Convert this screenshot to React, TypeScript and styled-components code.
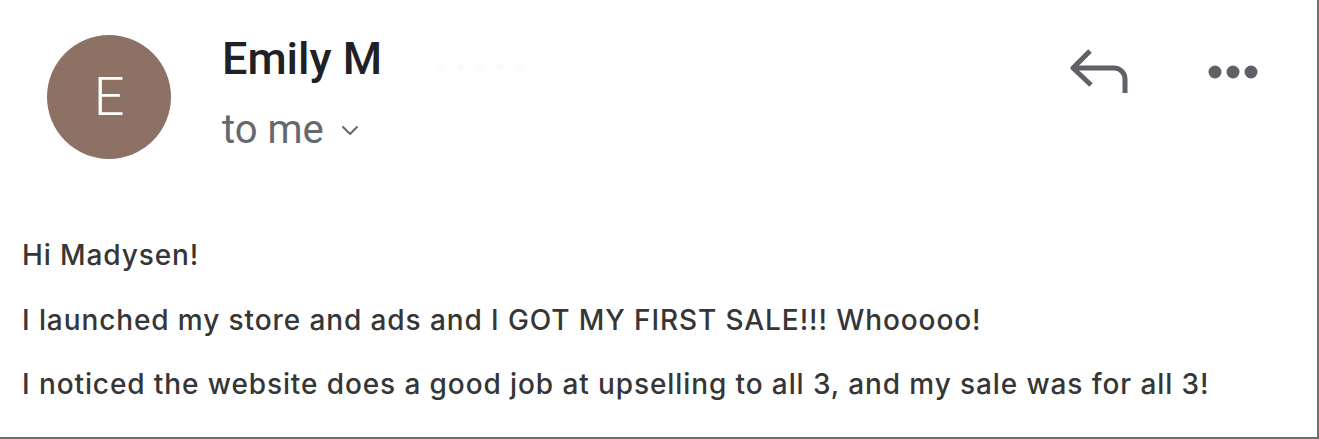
import React from "react";
import styled, { createGlobalStyle } from "styled-components";

const GlobalStyle = createGlobalStyle`
  html, body {
    margin: 0;
    padding: 0;
    background: #ffffff;
  }
  body {
    font-family: Roboto, "Liberation Sans", Arial, sans-serif;
  }
`;

const Card = styled.div`
  box-sizing: border-box;
  width: 1319px;
  height: 439px;
  background: #ffffff;
  border-right: 2px solid #6f6f6f;
  border-bottom: 2px solid #6f6f6f;
  display: flex;
  flex-direction: column;
  overflow: hidden;
`;

const Header = styled.div`
  display: flex;
  align-items: flex-start;
  padding: 35px 57px 0 47px;
`;

const Avatar = styled.div`
  flex: none;
  width: 124px;
  height: 124px;
  border-radius: 50%;
  background: #8e7165;
  color: #ffffff;
  display: flex;
  align-items: center;
  justify-content: center;
  font-family: Roboto, "Liberation Sans", sans-serif;
  font-weight: 300;
  font-size: 54px;
  line-height: 1;
`;

const Meta = styled.div`
  display: flex;
  flex-direction: column;
  margin-left: 51px;
  margin-top: -2px;
`;

const NameRow = styled.div`
  display: flex;
  align-items: baseline;
`;

const Name = styled.span`
  font-family: Roboto, "Liberation Sans", sans-serif;
  font-weight: 500;
  font-size: 45px;
  line-height: 52px;
  color: #202124;
`;

const HiddenAddress = styled.span`
  margin-left: 56px;
  font-family: Roboto, "Liberation Sans", sans-serif;
  font-size: 22px;
  color: #e6e6e6;
  filter: blur(2px);
  letter-spacing: 4px;
`;

const Recipient = styled.button`
  display: flex;
  align-items: center;
  gap: 16px;
  margin-top: 21px;
  padding: 0;
  border: none;
  background: none;
  font-family: Roboto, "Liberation Sans", sans-serif;
  font-weight: 400;
  font-size: 40px;
  line-height: 48px;
  color: #65686d;
  cursor: pointer;
`;

const Actions = styled.div`
  margin-left: auto;
  display: flex;
  align-items: flex-start;
  gap: 74px;
  margin-top: 12px;
`;

const IconButton = styled.button<{ $offset?: number }>`
  padding: 0;
  border: none;
  background: none;
  display: flex;
  margin-top: ${(p) => p.$offset ?? 0}px;
  color: #5f6166;
  cursor: pointer;
`;

const Body = styled.div`
  display: flex;
  flex-direction: column;
  gap: 28.5px;
  padding: 78px 0 0 22px;
`;

const Paragraph = styled.p`
  margin: 0;
  font-family: Inter, "Liberation Sans", Arial, sans-serif;
  font-weight: 500;
  font-size: 28px;
  line-height: 36px;
  letter-spacing: 0.9px;
  color: #363636;
  white-space: nowrap;
`;

const Chevron = () => (
  <svg width="20" height="12" viewBox="0 0 20 12" fill="none">
    <path d="M3 3 L10 10 L17 3" stroke="#65686d" strokeWidth="2" strokeLinecap="round" strokeLinejoin="round" />
  </svg>
);

const ReplyIcon = () => (
  <svg width="62" height="48" viewBox="0 0 62 48" fill="none">
    <path d="M20 4 L3 21 L21 38" stroke="currentColor" strokeWidth="5" strokeLinejoin="round" strokeLinecap="butt" />
    <path d="M4 21 H44 a11 11 0 0 1 11 11 V46" stroke="currentColor" strokeWidth="5" strokeLinecap="butt" />
  </svg>
);

const MoreIcon = () => (
  <svg width="54" height="16" viewBox="0 0 54 16" fill="currentColor">
    <circle cx="9" cy="8" r="6.5" />
    <circle cx="27" cy="8" r="6.5" />
    <circle cx="45" cy="8" r="6.5" />
  </svg>
);

export default function App() {
  return (
    <>
      <GlobalStyle />
      <Card>
        <Header>
          <Avatar>E</Avatar>
          <Meta>
            <NameRow>
              <Name>Emily M</Name>
              <HiddenAddress>- - - - -</HiddenAddress>
            </NameRow>
            <Recipient>
              to me
              <Chevron />
            </Recipient>
          </Meta>
          <Actions>
            <IconButton aria-label="Reply">
              <ReplyIcon />
            </IconButton>
            <IconButton aria-label="More" $offset={17}>
              <MoreIcon />
            </IconButton>
          </Actions>
        </Header>
        <Body>
          <Paragraph>Hi Madysen!</Paragraph>
          <Paragraph>I launched my store and ads and I GOT MY FIRST SALE!!! Whooooo!</Paragraph>
          <Paragraph>I noticed the website does a good job at upselling to all 3, and my sale was for all 3!</Paragraph>
        </Body>
      </Card>
    </>
  );
}
